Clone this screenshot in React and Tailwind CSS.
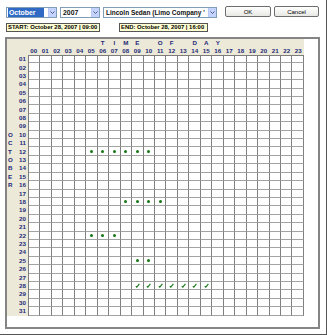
const hours = Array.from({ length: 24 }, (_, i) => String(i).padStart(2, '0'))
const days = Array.from({ length: 31 }, (_, i) => String(i + 1).padStart(2, '0'))

// letters written above the hour columns
const heading = { 6: 'T', 7: 'I', 8: 'M', 9: 'E', 11: 'O', 12: 'F', 14: 'D', 15: 'A', 16: 'Y' }
const month = { 10: 'O', 11: 'C', 12: 'T', 13: 'O', 14: 'B', 15: 'E', 16: 'R' }

const dots = {
    12: [5, 6, 7, 8, 9, 10],
    18: [8, 9, 10, 11],
    22: [5, 6, 7],
    25: [9, 10],
}
const checks = {
    28: [9, 10, 11, 12, 13, 14, 15],
}

const Arrow = () => (
    <div className="w-[8px] h-full bg-[#c3d3fd] border-l border-[#b9c9ef] flex items-center justify-center">
        <svg width="5" height="3" viewBox="0 0 5 3">
            <path d="M0.5 0.5 L2.5 2.5 L4.5 0.5" fill="none" stroke="#4d6185" strokeWidth="1" />
        </svg>
    </div>
)

const Select = ({ width, children, selected }) => (
    <div className={`${width} h-[11px] border border-[#7f9db9] bg-white flex items-stretch`}>
        <div className="flex-1 flex items-center px-[1px] overflow-hidden">
            <span className={`${selected ? 'bg-[#316ac5] text-white pr-[9px]' : 'text-[#111]'} leading-[9px] whitespace-nowrap pl-[1px]`}>
                {children}
            </span>
        </div>
        <Arrow />
    </div>
)

const Check = () => (
    <svg width="5" height="5" viewBox="0 0 5 5">
        <path d="M0.8 3.2 L1.8 4.2 L4.4 0.8" fill="none" stroke="#1d7a1d" strokeWidth="1.1" />
    </svg>
)

const App = () => {
    return (
        <div className="w-[327px] h-[335px] bg-white border-r border-b border-[#555] font-['Liberation_Sans',sans-serif] font-bold overflow-hidden">
            <div className="flex items-start pt-[7px] pl-[6px] text-[6.9px]">
                <Select width="w-[51px]" selected>October</Select>
                <div className="w-[3px]" />
                <Select width="w-[40px]">2007</Select>
                <div className="w-[3px]" />
                <div className="text-[6.5px]">
                    <Select width="w-[114px]">Lincoln Sedan (Limo Company '</Select>
                </div>
                <button className="ml-[8px] -mt-[1px] w-[46px] h-[11px] rounded-[2px] border border-[#6e6e6e] bg-gradient-to-b from-white to-[#e8e8e4] text-[6px] font-normal text-black leading-none">
                    OK
                </button>
                <button className="ml-[3px] -mt-[1px] w-[45px] h-[11px] rounded-[2px] border border-[#6e6e6e] bg-gradient-to-b from-white to-[#e8e8e4] text-[6px] font-normal text-black leading-none">
                    Cancel
                </button>
            </div>

            <div className="flex items-center pt-[5px] pl-[6px] text-[5.9px] text-black">
                <div className="h-[9px] w-[94px] border border-[#555] bg-[#ffffd4] flex items-center pl-[1px] leading-none whitespace-nowrap">
                    START: October 28, 2007 | 09:00
                </div>
                <div className="ml-[19px] h-[9px] w-[89px] border border-[#555] bg-[#ffffd4] flex items-center pl-[1px] leading-none whitespace-nowrap">
                    END: October 28, 2007 | 16:00
                </div>
            </div>

            <div className="ml-[5px] mt-[5px] w-[315px] h-[292px] border-2 border-[#858585] text-[6.2px] text-[#23297a]">
                <div className="flex">
                    <div className="w-[21px] h-[16px] bg-[#ece9d8]" />
                    <div className="bg-[#ece9d8] w-[276px]">
                        <div className="flex h-[8px]">
                            {hours.map((h, i) => (
                                <div key={h} className="w-[11.5px] flex items-center justify-center leading-none">
                                    {heading[i] || ''}
                                </div>
                            ))}
                        </div>
                        <div className="flex h-[8px]">
                            {hours.map(h => (
                                <div key={h} className="w-[11.5px] flex items-center justify-center leading-none">
                                    {h}
                                </div>
                            ))}
                        </div>
                    </div>
                </div>
                <div className="flex flex-col">
                    {days.map((d, r) => {
                        const day = r + 1
                        return (
                            <div key={d} className="flex h-[8.42px]">
                                <div className="w-[21px] bg-[#ece9d8] flex items-center justify-between pl-[1px] pr-[2px] leading-none">
                                    <span>{month[day] || ''}</span>
                                    <span>{d}</span>
                                </div>
                                <div className={`flex w-[276px] border-l border-[#7d7d7d] ${r === 0 ? 'border-t' : ''}`}>
                                    {hours.map((h, c) => (
                                        <div key={h} className="w-[11.5px] border-r border-r-[#808080] border-b border-b-[#a3a3a3] flex items-center justify-center">
                                            {dots[day] && dots[day].includes(c) && (
                                                <div className="w-[3px] h-[3px] rounded-full bg-[#137613]" />
                                            )}
                                            {checks[day] && checks[day].includes(c) && <Check />}
                                        </div>
                                    ))}
                                </div>
                            </div>
                        )
                    })}
                </div>
            </div>
        </div>
    )
}

export default App
